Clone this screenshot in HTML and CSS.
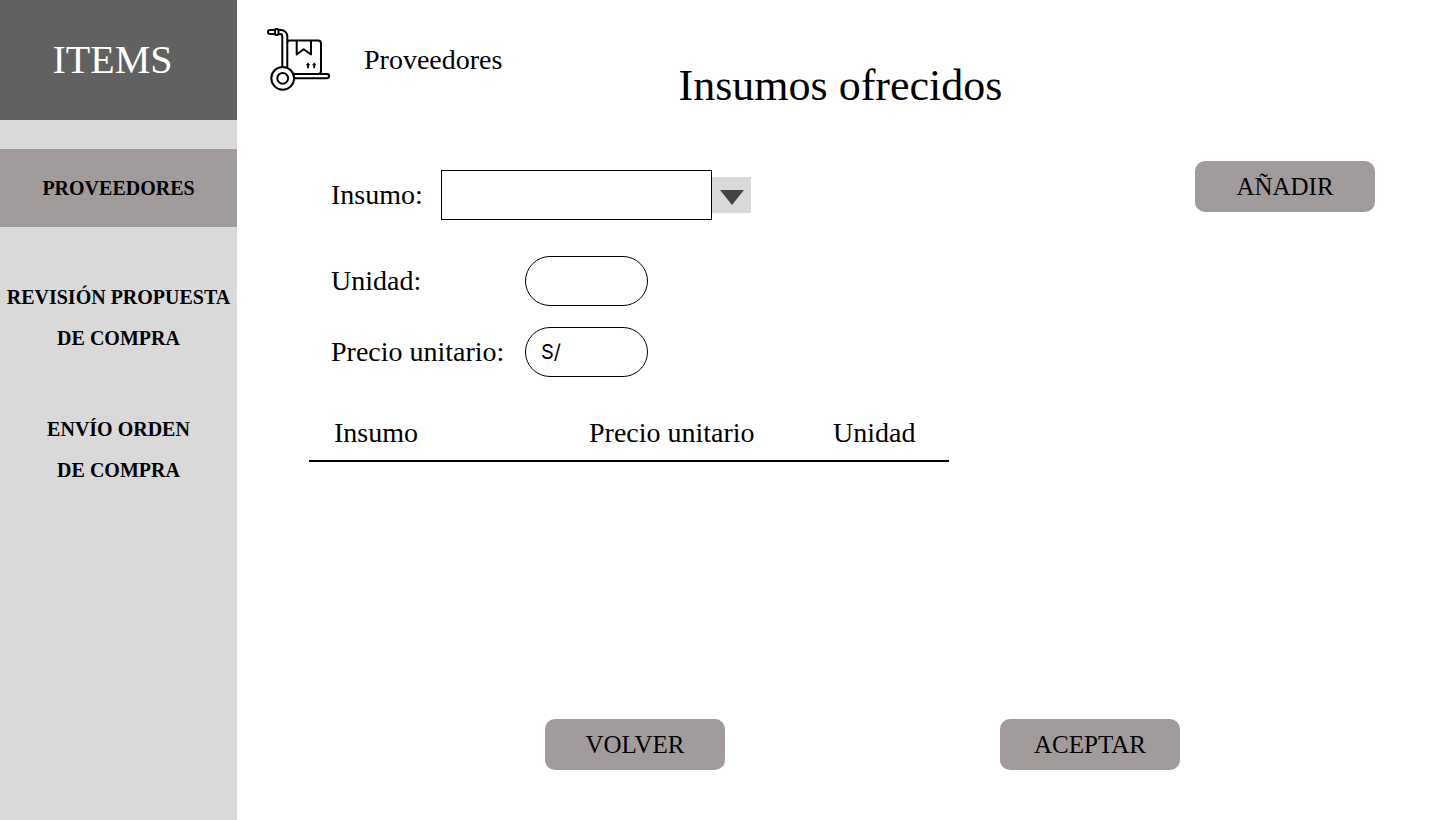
FILE: index.html
```html
<!DOCTYPE html>
<html lang="es">
<head>
  <meta charset="utf-8">
  <meta name="viewport" content="width=device-width, initial-scale=1">
  <title>Insumos ofrecidos</title>
  <link rel="stylesheet" href="styles.css">
</head>
<body>
  <div class="app">
    <aside class="sidebar">
      <div class="brand">ITEMS</div>
      <nav class="menu">
        <a class="menu-item active" href="#proveedores">PROVEEDORES</a>
        <a class="menu-item" href="#revision">REVISIÓN PROPUESTA<br>DE COMPRA</a>
        <a class="menu-item" href="#envio">ENVÍO ORDEN<br>DE COMPRA</a>
      </nav>
    </aside>
    <main class="main">
      <header class="header">
        <div class="section">
          <svg class="cart" viewBox="0 0 64 64" aria-hidden="true">
            <g fill="none" stroke="#000" stroke-width="2" stroke-linecap="round" stroke-linejoin="round">
              <path d="M11.500 2H14a6.300 6.300 0 0 1 6.300 6.300V40M11.500 6H13a2.300 2.300 0 0 1 2.300 2.300V39"/>
              <path d="M8 2H3a2 2 0 0 0 0 4h5"/>
              <rect x="8" y="1" width="3.500" height="6" rx="1"/>
              <path d="M20.300 14.500a2 2 0 0 1 2-2H51a3 3 0 0 1 3 3V43a3 3 0 0 1-3 3"/>
              <path d="M29.700 13v13.500l7-5.200 7.300 5.200V13"/>
              <path d="M26 46H60a2.100 2.100 0 0 1 0 4.200H28"/>
              <circle cx="15.700" cy="50.300" r="11.400"/>
              <circle cx="15.700" cy="50.300" r="5.400"/>
            </g>
            <path d="M41 34.500l2.200 2.800h-1.300v3h-1.800v-3h-1.300zM47.200 34.500l2.200 2.800h-1.300v3h-1.800v-3H45z"/>
          </svg>
          <span>Proveedores</span>
        </div>
        <h1 class="title">Insumos ofrecidos</h1>
      </header>

      <form class="form">
        <div class="fields">
          <div class="field field-insumo">
            <label for="insumo">Insumo:</label>
            <select id="insumo" class="select"><option></option></select>
            <button class="drop" type="button" aria-label="Desplegar">
              <svg class="arrow" viewBox="0 0 24 15" aria-hidden="true"><path d="M0 0h24L12 15z" fill="#444"/></svg>
            </button>
          </div>
          <div class="field">
            <label for="unidad">Unidad:</label>
            <input id="unidad" class="pill" type="text">
          </div>
          <div class="field">
            <label for="precio">Precio unitario:</label>
            <input id="precio" class="pill" type="text" value="S/">
          </div>
        </div>
        <button class="btn" type="button">AÑADIR</button>
      </form>

      <table class="table">
        <thead>
          <tr>
            <th class="col-insumo" scope="col">Insumo</th>
            <th class="col-precio" scope="col">Precio unitario</th>
            <th scope="col">Unidad</th>
          </tr>
        </thead>
        <tbody></tbody>
      </table>

      <footer class="actions">
        <button class="btn" type="button">VOLVER</button>
        <button class="btn" type="button">ACEPTAR</button>
      </footer>
    </main>
  </div>
</body>
</html>
```
FILE: styles.css
```css
* {
  box-sizing: border-box;
}

body {
  margin: 0;
  background: #fff;
  color: #000;
  font-family: "Liberation Serif", serif;
  font-size: 28px;
  line-height: 32px;
}

.app {
  display: flex;
  min-height: 100vh;
}

.sidebar {
  flex: 0 0 237px;
  background: #d9d9d9;
}

.brand {
  display: flex;
  align-items: center;
  justify-content: center;
  height: 120px;
  padding-right: 12px;
  background: #616161;
  color: #fff;
  font-size: 40px;
}

.menu {
  display: flex;
  flex-direction: column;
  gap: 50px;
  padding-top: 29px;
}

.menu-item {
  color: #000;
  font-size: 20px;
  font-weight: bold;
  line-height: 41px;
  text-align: center;
  text-decoration: none;
  white-space: nowrap;
}

.menu-item.active {
  padding: 19px 0 18px;
  background: #a19b9b;
}

.main {
  display: flex;
  flex: 1;
  flex-direction: column;
  min-width: 0;
  padding-bottom: 50px;
}

.header {
  display: grid;
  grid-template-columns: 1fr auto 1fr;
  padding: 28px 26px 0 30px;
}

.section {
  display: flex;
  align-items: center;
  align-self: start;
  gap: 33px;
}

.cart {
  width: 64px;
  height: 64px;
}

.title {
  margin: 32px 0 0;
  font-size: 44px;
  font-weight: normal;
  line-height: 52px;
}

.form {
  display: flex;
  align-items: flex-start;
  justify-content: space-between;
  padding: 49px 65px 0 94px;
}

.fields {
  display: flex;
  flex-direction: column;
  gap: 21px;
  padding-top: 9px;
}

.field {
  display: grid;
  grid-template-columns: 194px 123px;
  align-items: center;
}

.field-insumo {
  grid-template-columns: 110px 271px 39px;
  margin-bottom: 15px;
}

.select {
  height: 50px;
  padding: 0 12px;
  border: 1px solid #000;
  border-radius: 0;
  background: #fff;
  appearance: none;
  font: inherit;
}

.drop {
  display: flex;
  align-items: center;
  justify-content: center;
  height: 36px;
  padding: 4px 0 0;
  border: 0;
  background: #d9d9d9;
}

.arrow {
  width: 24px;
  height: 15px;
}

.pill {
  width: 100%;
  height: 50px;
  padding: 0 15px;
  border: 1px solid #000;
  border-radius: 25px;
  background: #fff;
  font-family: Inter, sans-serif;
  font-size: 20px;
}

.btn {
  width: 180px;
  height: 51px;
  padding: 0;
  border: 0;
  border-radius: 10px;
  background: #a19b9b;
  color: #000;
  font-family: inherit;
  font-size: 25px;
}

.table {
  width: 640px;
  margin: 40px 0 0 72px;
  border-collapse: collapse;
  table-layout: fixed;
}

.table th {
  padding: 0 0 11px;
  border-bottom: 2px solid #000;
  font-weight: normal;
  text-align: left;
}

.table .col-insumo {
  width: 280px;
  padding-left: 25px;
}

.table .col-precio {
  width: 244px;
}

.actions {
  display: flex;
  justify-content: space-between;
  margin-top: auto;
  padding: 0 260px 0 308px;
}
```
